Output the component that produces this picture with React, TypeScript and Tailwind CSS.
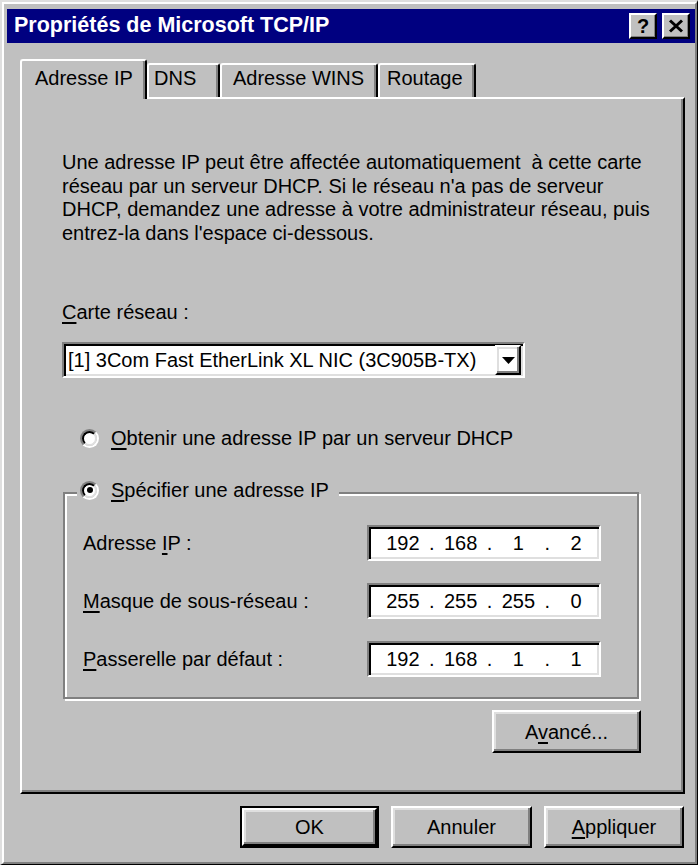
import React from "react";

const raised =
  "border-2 border-t-white border-l-white border-r-black border-b-black shadow-[inset_-2px_-2px_0_0_#808080,inset_2px_2px_0_0_#dfdfdf]";
const sunken =
  "border-2 border-t-[#808080] border-l-[#808080] border-r-white border-b-white shadow-[inset_2px_2px_0_0_#000000,inset_-2px_-2px_0_0_#dfdfdf]";
const small =
  "border-t-2 border-l-2 border-r-2 border-b-2 border-t-white border-l-white border-r-black border-b-black shadow-[inset_-1px_-1px_0_0_#808080]";

const U = ({ children }: { children: React.ReactNode }) => (
  <span className="underline decoration-[1.5px] underline-offset-[3px]">{children}</span>
);

const Radio = ({ checked }: { checked?: boolean }) => (
  <span className="flex h-[19px] w-[19px] shrink-0 rounded-full border-2 border-t-[#808080] border-l-[#808080] border-r-white border-b-white">
    <span className="flex h-full w-full items-center justify-center rounded-full border-2 border-t-black border-l-black border-r-[#dfdfdf] border-b-[#dfdfdf] bg-white">
      {checked && <span className="h-[6px] w-[6px] rounded-full bg-black" />}
    </span>
  </span>
);

const IpField = ({ parts }: { parts: string[] }) => (
  <div className={`flex h-[36px] w-[234px] items-center bg-white pl-[11px] ${sunken}`}>
    {parts.map((p, i) => (
      <React.Fragment key={i}>
        {i > 0 && <span className="w-[12px] text-center">.</span>}
        <span className="w-[46px] text-center">{p}</span>
      </React.Fragment>
    ))}
  </div>
);

interface TabProps {
  label: string;
  width: string;
  pad: string;
  active?: boolean;
}
const Tab = ({ label, width, pad, active }: TabProps) => (
  <div
    className={`flex flex-col rounded-t-[3px] border-t-2 border-l-2 border-r-2 border-t-white border-l-white border-r-black bg-[#c0c0c0] shadow-[inset_-2px_0_0_0_#808080] ${width} ${pad} ${
      active ? "h-[40px] pt-[5px]" : "mb-[2px] h-[34px] pt-[1px]"
    }`}
  >
    <span className="leading-[24px]">{label}</span>
  </div>
);

const Button = ({ children, width, isDefault }: { children: React.ReactNode; width: string; isDefault?: boolean }) =>
  isDefault ? (
    <div className={`flex h-[42px] ${width} border-2 border-black`}>
      <div className={`flex flex-1 items-center justify-center ${raised}`}>{children}</div>
    </div>
  ) : (
    <div className={`flex h-[42px] ${width} items-center justify-center ${raised}`}>{children}</div>
  );

export default function App() {
  return (
    <div className="h-[865px] w-[698px] overflow-hidden border-t-2 border-l-2 border-r border-b border-t-[#dfdfdf] border-l-[#dfdfdf] border-r-black border-b-black bg-[#c0c0c0] font-['Liberation_Sans',Arial,sans-serif] text-[20px] text-black">
      <div className="flex h-full flex-col border-2 border-t-white border-l-white border-r-[#808080] border-b-[#808080] pl-[3px] pt-[5px]">
        {/* title bar */}
        <div className="flex h-[34px] shrink-0 items-center justify-between bg-[#000080] pl-[7px] pr-[5px]">
          <span className="text-[21.5px] font-bold leading-none text-white">Propriétés de Microsoft TCP/IP</span>
          <div className="flex gap-[5px]">
            <div className={`flex h-[26px] w-[28px] items-center justify-center bg-[#c0c0c0] ${small}`}>
              <span className="text-[20px] font-bold leading-none text-black">?</span>
            </div>
            <div className={`flex h-[26px] w-[28px] items-center justify-center bg-[#c0c0c0] ${small}`}>
              <svg width="16" height="14" viewBox="0 0 16 14">
                <path d="M2 1.5 L14 12.5 M14 1.5 L2 12.5" stroke="#000000" strokeWidth="3" />
              </svg>
            </div>
          </div>
        </div>

        {/* tabs */}
        <div className="relative z-10 mt-[16px] -mb-[2px] ml-[13px] flex h-[40px] items-end">
          <Tab label="Adresse IP" width="w-[127px]" pad="pl-[13px]" active />
          <Tab label="DNS" width="w-[73px]" pad="pl-[5px]" />
          <Tab label="Adresse WINS" width="w-[158px]" pad="pl-[11px]" />
          <Tab label="Routage" width="w-[98px]" pad="pl-[7px]" />
        </div>

        {/* panel */}
        <div className="mr-[10px] ml-[13px] flex h-[697px] shrink-0 flex-col border-2 border-t-white border-l-white border-r-black border-b-black pt-[52px] pr-[42px] pl-[40px] shadow-[inset_-2px_-2px_0_0_#808080]">
          <p className="whitespace-pre leading-[23.5px]">
            {"Une adresse IP peut être affectée automatiquement  à cette carte"}
            <br />
            {"réseau par un serveur DHCP. Si le réseau n'a pas de serveur"}
            <br />
            {"DHCP, demandez une adresse à votre administrateur réseau, puis"}
            <br />
            {"entrez-la dans l'espace ci-dessous."}
          </p>

          <p className="mt-[56px] leading-[23.5px]">
            <U>C</U>arte réseau :
          </p>

          <div className={`mt-[17.5px] flex h-[36px] w-[463px] items-center justify-between bg-white pr-[2px] pl-[4px] ${sunken}`}>
            <span className="whitespace-nowrap">[1] 3Com Fast EtherLink XL NIC (3C905B-TX)</span>
            <div className={`flex h-[30px] w-[26px] items-center justify-center ${raised}`}>
              <svg width="13" height="7" viewBox="0 0 13 7">
                <path d="M0 0 H13 L6.5 7 Z" fill="#000000" />
              </svg>
            </div>
          </div>

          <div className="mt-[48px] ml-[18px] flex h-[24px] items-center gap-[12px]">
            <Radio />
            <span>
              <U>O</U>btenir une adresse IP par un serveur DHCP
            </span>
          </div>

          {/* group box */}
          <div className="mt-[42px] ml-[1px] flex w-[576px] flex-col border-2 border-[#808080] pr-[36px] pb-[20px] pl-[18px] shadow-[2px_2px_0_0_#ffffff,inset_2px_2px_0_0_#ffffff]">
            <div className="-mt-[16px] -ml-[6px] flex h-[24px] items-center gap-[12px] self-start bg-[#c0c0c0] pr-[10px] pl-[3px]">
              <Radio checked />
              <span>
                <U>S</U>pécifier une adresse IP
              </span>
            </div>
            <div className="mt-[23px] flex flex-col gap-[22px]">
              <div className="flex h-[36px] items-center justify-between">
                <span>
                  Adresse <U>I</U>P :
                </span>
                <IpField parts={["192", "168", "1", "2"]} />
              </div>
              <div className="flex h-[36px] items-center justify-between">
                <span>
                  <U>M</U>asque de sous-réseau :
                </span>
                <IpField parts={["255", "255", "255", "0"]} />
              </div>
              <div className="flex h-[36px] items-center justify-between">
                <span>
                  <U>P</U>asserelle par défaut :
                </span>
                <IpField parts={["192", "168", "1", "1"]} />
              </div>
            </div>
          </div>

          <div className={`mt-[11px] flex h-[43px] w-[149px] items-center justify-center self-end ${raised}`}>
            <span>
              A<U>v</U>ancé...
            </span>
          </div>
        </div>

        {/* dialog buttons */}
        <div className="mt-[12px] flex justify-end gap-[12px] pr-[11px]">
          <Button width="w-[139px]" isDefault>
            OK
          </Button>
          <Button width="w-[141px]">Annuler</Button>
          <Button width="w-[140px]">
            <U>A</U>ppliquer
          </Button>
        </div>
      </div>
    </div>
  );
}
